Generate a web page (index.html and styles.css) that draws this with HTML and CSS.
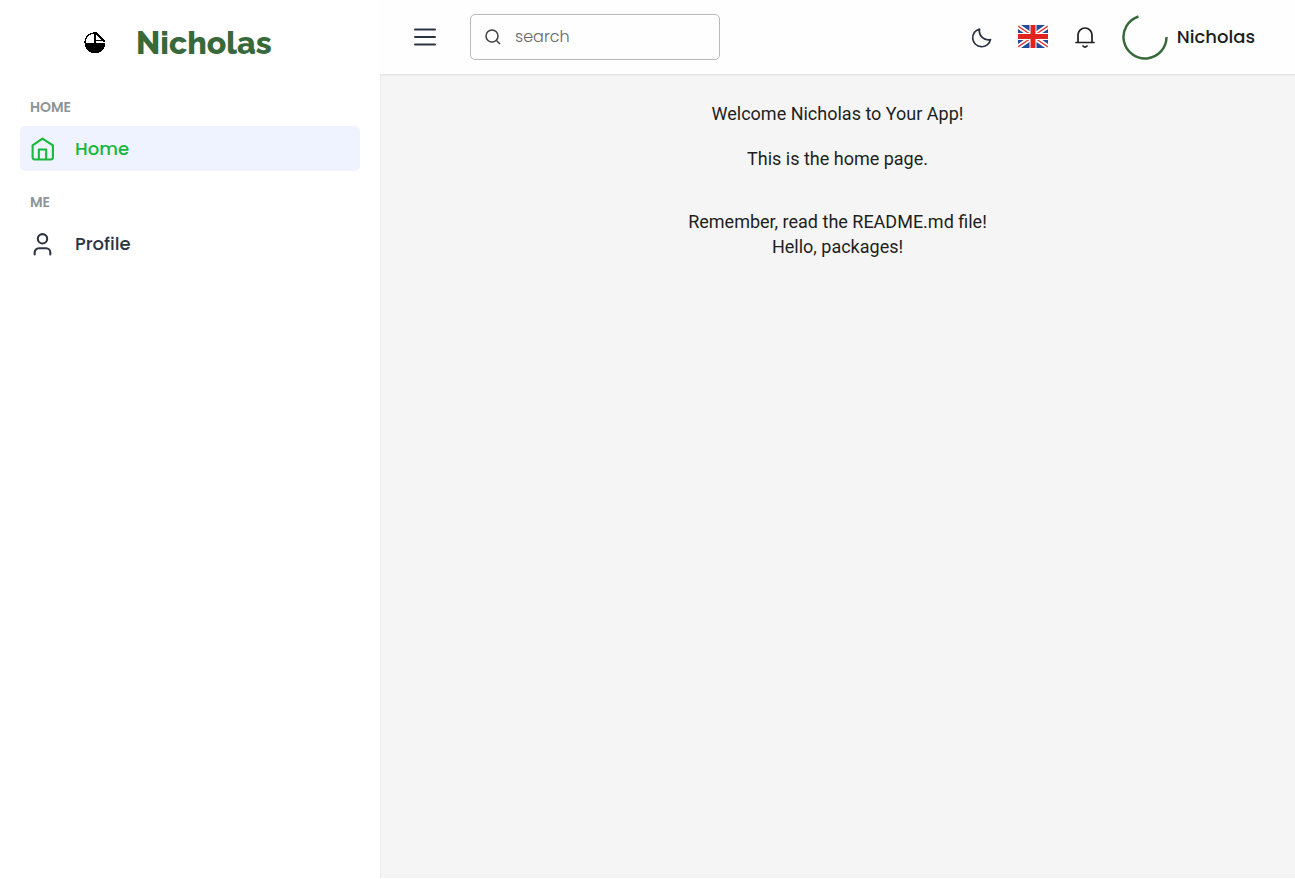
FILE: index.html
```html
<!DOCTYPE html>
<html lang="en">
<head>
<meta charset="utf-8">
<meta name="viewport" content="width=device-width, initial-scale=1">
<title>Home</title>
<link rel="stylesheet" href="styles.css">
</head>
<body>
<div class="app">
  <aside class="sidebar">
    <div class="brand">
      <svg class="brand-logo" viewBox="0 0 22 22" shape-rendering="crispEdges" aria-hidden="true">
        <path d="M10 1A9.500 9.500 0 0 0 1 11M12 1L21 10" fill="none" stroke="#000" stroke-width="1.500"/>
        <path d="M.5 11H21.500A10.500 10.500 0 0 1 .5 11Z" fill="#000"/>
        <path d="M10 0H12V11H10ZM12 8H19V9H12Z" fill="#000"/>
      </svg>
      <span class="brand-name">Nicholas</span>
    </div>
    <nav class="menu">
      <h2 class="menu-heading">HOME</h2>
      <a class="menu-link menu-link-active" href="#home">
        <svg class="menu-icon" viewBox="0 0 24 24" aria-hidden="true"><path d="M12 2.500L2.500 9V20.500Q2.500 22.500 4.500 22.500H20Q22 22.500 22 20.500V9ZM8.500 22V13H15.500V22"/></svg>
        <span>Home</span>
      </a>
      <h2 class="menu-heading">ME</h2>
      <a class="menu-link" href="#profile">
        <svg class="menu-icon" viewBox="0 0 24 24" aria-hidden="true"><circle cx="12" cy="7.500" r="4.500"/><path d="M4.500 22.500V20.500A4 4 0 0 1 8.500 16.500H15.500A4 4 0 0 1 19.500 20.500V22.500"/></svg>
        <span>Profile</span>
      </a>
    </nav>
  </aside>
  <div class="page">
    <header class="topbar">
      <button class="icon-button" type="button" aria-label="Menu">
        <svg class="menu-toggle" viewBox="0 0 22 18"><path d="M1 1.500H21M1 9H21M1 16.500H21"/></svg>
      </button>
      <label class="search">
        <svg class="search-icon" viewBox="0 0 16 16" aria-hidden="true"><circle cx="7" cy="7" r="6"/><path d="M11.500 11.500L15 15"/></svg>
        <input class="search-input" type="text" placeholder="search" aria-label="search">
      </label>
      <div class="actions">
        <button class="icon-button" type="button" aria-label="Dark mode">
          <svg class="action-icon moon" viewBox="0 0 22 22"><path d="M9.500 3A9 9 0 1 0 20.500 13.500C14 15 8.500 10 9.500 3Z"/></svg>
        </button>
        <button class="icon-button" type="button" aria-label="Language">
          <svg class="flag" viewBox="0 0 30 23">
            <rect width="30" height="23" rx="2" fill="#234a9c"/>
            <path d="M0 1L30 22M30 1L0 22" stroke="#fff" stroke-width="5"/>
            <path d="M0 1L11 8.500M30 22L19 14.500M30 1L19 8.500M0 22L11 14.500" stroke="#e03a38" stroke-width="1.500"/>
            <path d="M15 0V23M0 11.500H30" stroke="#fff" stroke-width="7"/>
            <path d="M15 0V23M0 11.500H30" stroke="#e0231f" stroke-width="5"/>
          </svg>
        </button>
        <button class="icon-button" type="button" aria-label="Notifications">
          <svg class="action-icon bell" viewBox="0 0 22 22"><path d="M2 16.500H20M4 16.500V9A7 7 0 0 1 18 9V16.500M9 20Q11 22 13 20"/></svg>
        </button>
        <button class="account" type="button">
          <svg class="spinner" viewBox="0 0 46 46" aria-hidden="true"><path d="M44.500 23A21.500 21.500 0 1 1 16.500 2.500"/></svg>
          <span>Nicholas</span>
        </button>
      </div>
    </header>
    <main class="content">
      <p class="line">Welcome Nicholas to Your App!</p>
      <p class="line">This is the home page.</p>
      <p class="note">Remember, read the README.md file!<br>Hello, packages!</p>
    </main>
  </div>
</div>
</body>
</html>
```

FILE: styles.css
```css
* { box-sizing: border-box; }
body {
  margin: 0;
  background: #fff;
  color: #1d1f1d;
  font-family: Poppins, Inter, "Open Sans", sans-serif;
}
button {
  padding: 0;
  border: 0;
  background: none;
  color: inherit;
  font: inherit;
  cursor: pointer;
}
svg { display: block; flex: none; }
.app {
  display: grid;
  grid-template-columns: 380px 1fr;
  min-height: 100vh;
  padding-bottom: 1px;
}
.sidebar { padding: 20px; }
.brand {
  display: flex;
  align-items: center;
  gap: 30px;
  height: 46px;
  padding-left: 64px;
}
.brand-logo { width: 22px; height: 22px; }
.brand-name {
  color: #38693a;
  font: 800 32px/46px Raleway, "Open Sans", sans-serif;
}
.menu { padding-top: 31px; }
.menu-heading {
  margin: 0;
  padding-left: 10px;
  color: #8c9499;
  font-size: 14px;
  font-weight: 600;
  line-height: 20px;
}
.menu-link {
  display: flex;
  align-items: center;
  gap: 20px;
  height: 45px;
  margin: 9px 0 21px;
  padding: 0 10px;
  border-radius: 5px;
  color: #2c3444;
  font-size: 18px;
  font-weight: 500;
  text-decoration: none;
}
.menu-link-active { background: #eff3ff; color: #16b83c; }
.menu-icon {
  width: 25px;
  height: 25px;
  fill: none;
  stroke: currentColor;
  stroke-width: 2;
  stroke-linecap: round;
  stroke-linejoin: round;
}
.page {
  display: flex;
  flex-direction: column;
  box-shadow: inset 1px 0 #ececec;
  background: #f5f5f5;
}
.topbar {
  display: flex;
  align-items: center;
  gap: 34px;
  height: 75px;
  padding: 0 40px 1px 34px;
  border-bottom: 1px solid #e6e6e6;
  background: #fefefe;
  box-shadow: 0 1px 1px #ececec;
}
.menu-toggle {
  width: 22px;
  height: 18px;
  fill: none;
  stroke: #2c3444;
  stroke-width: 2;
  stroke-linecap: round;
}
.search {
  display: flex;
  align-items: center;
  gap: 14px;
  width: 250px;
  height: 46px;
  padding: 0 14px;
  border: 1px solid #b9b9b9;
  border-radius: 5px;
}
.search-icon {
  width: 16px;
  height: 16px;
  fill: none;
  stroke: #3c413e;
  stroke-width: 1.5;
}
.search-input {
  width: 100%;
  min-width: 0;
  padding: 0;
  border: 0;
  outline: 0;
  background: none;
  color: inherit;
  font: 300 16px/24px Poppins, Inter, sans-serif;
}
.search-input::placeholder { color: #666; opacity: 1; }
.actions {
  display: flex;
  align-items: center;
  gap: 26px;
  margin-left: auto;
}
.action-icon {
  width: 22px;
  height: 22px;
  fill: none;
  stroke-width: 1.7;
  stroke-linecap: round;
  stroke-linejoin: round;
}
.moon { stroke: #2c3444; }
.bell { stroke: #1d1f1d; }
.flag { width: 30px; height: 23px; overflow: hidden; border-radius: 2px; }
.account {
  display: flex;
  align-items: center;
  gap: 9px;
  font-size: 18px;
  font-weight: 500;
}
.spinner {
  width: 46px;
  height: 46px;
  fill: none;
  stroke: #38693a;
  stroke-width: 2.500;
}
.content {
  padding: 26px 20px;
  font: 18px/25px Roboto, sans-serif;
  text-align: center;
}
.line { margin: 0 0 20px; }
.note { margin: 38px 0 0; }
```
